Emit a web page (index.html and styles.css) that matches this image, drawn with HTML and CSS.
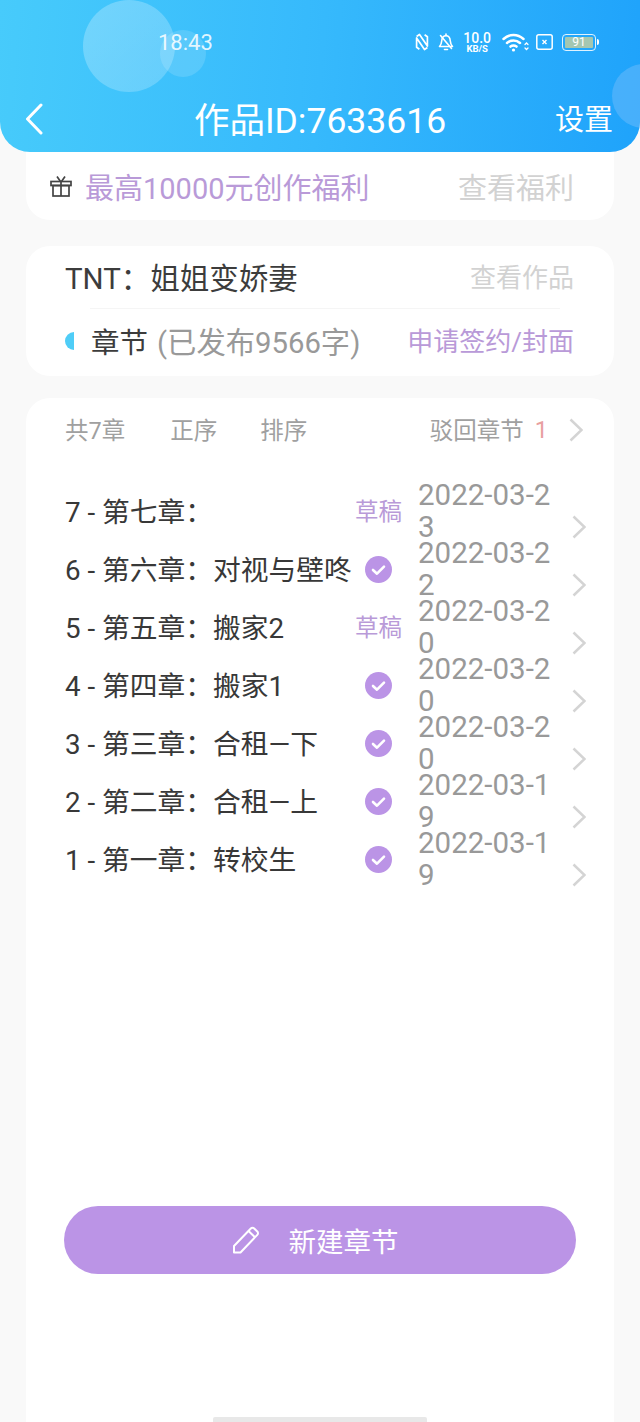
FILE: index.html
```html
<!DOCTYPE html>
<html lang="zh-CN">
<head>
  <meta charset="UTF-8" />
  <title>作品ID:7633616</title>
  <meta name="viewport" content="width=device-width, initial-scale=1.0" />
  <link rel="stylesheet" href="styles.css">
</head>
<body>

<header class="top">
  <span class="bubble bubble-big"></span>
  <span class="bubble bubble-small"></span>
  <span class="bubble bubble-right"></span>

  <div class="status">
    <span class="time">18:43</span>
    <div class="status-icons">
      <svg class="ic-nfc" width="14" height="18" viewBox="0 0 14 18" fill="none" stroke="#fff" stroke-width="1.7" stroke-linejoin="round"><path d="M1.600 3.500 4.500 1.500 4.500 1.500 12.400 13V3.800L9.600 1.700M12.400 14.500 9.500 16.500 1.600 5v9.200l2.800 2.100"/></svg>
      <svg class="ic-bell" width="16" height="18" viewBox="0 0 16 18" fill="none" stroke="#fff" stroke-width="1.6" stroke-linecap="round" stroke-linejoin="round"><path d="M1.5 13.5h13c-1.500-1.500-2-3-2.200-5.500C12 4.500 10.500 2.800 8 2.800S4 4.500 3.700 8c-.2 2.500-.7 4-2.200 5.500Z"/><path d="M6.500 16.500h3M8 1v1.500M2.500 2.500l11 13"/></svg>
      <div class="speed"><span class="speed-num">10.0</span><span class="speed-unit">KB/S</span></div>
      <svg class="ic-wifi" width="27" height="19" viewBox="0 0 27 19" fill="none" stroke="#fff" stroke-width="2.500" stroke-linecap="round"><path d="M1.500 6C7.500.6 15.500.6 21.500 6M5 10c3.700-3.300 9.300-3.300 13 0M8.500 13.600c1.800-1.400 4.200-1.400 6 0"/><circle cx="11.500" cy="17" r="1.600" fill="#fff" stroke="none"/><path d="m23 11.500 1.500-1.500 1.500 1.500M23 15l1.500 1.500L26 15" stroke-width="1.300"/></svg>
      <svg class="ic-sim" width="17" height="16" viewBox="0 0 17 16" fill="none" stroke="#fff"><rect x=".8" y=".8" width="15.400" height="14.400" rx="2" stroke-width="1.500"/><path d="m6.500 6 4 4m0-4-4 4" stroke-width="1.400"/></svg>
      <div class="battery"><span class="battery-level">91</span></div>
    </div>
  </div>

  <nav class="nav">
    <svg class="back" width="18" height="32" viewBox="0 0 18 32" fill="none" stroke="#fff" stroke-width="3" stroke-linecap="round" stroke-linejoin="round"><path d="M16 2 2.500 16 16 30"/></svg>
    <h1 class="title">作品ID:7633616</h1>
    <span class="settings">设置</span>
  </nav>
</header>

<section class="card benefit">
  <svg class="gift" width="22" height="22" viewBox="0 0 22 22" fill="none" stroke="#444" stroke-width="1.700"><rect x="1" y="6.500" width="20" height="4"/><rect x="3" y="10.500" width="16" height="10.500"/><path d="M11 6.500V21M7 1.500l3.500 5M15 1.500l-3.500 5"/></svg>
  <span class="benefit-text">最高10000元创作福利</span>
  <span class="benefit-link">查看福利</span>
</section>

<section class="card book">
  <div class="book-head">
    <span class="book-name">TNT：姐姐变娇妻</span>
    <span class="book-link">查看作品</span>
  </div>
  <div class="book-line"></div>
  <div class="book-foot">
    <span class="dot"></span>
    <span class="book-chapters">章节 <em>(已发布9566字)</em></span>
    <span class="book-apply">申请签约/封面</span>
  </div>
</section>

<section class="card chapters">
  <div class="tools">
    <span class="tool-count">共7章</span>
    <span class="tool-item">正序</span>
    <span class="tool-item">排序</span>
    <span class="tool-reject">驳回章节</span>
    <span class="tool-num">1</span>
    <svg class="chev" width="14" height="24" viewBox="0 0 14 24" fill="none" stroke="#d4d4d4" stroke-width="2.500"><path d="m1.500 1.500 11 10.500-11 10.500"/></svg>
  </div>

  <ul class="list">
    <li class="row">
      <span class="row-name">7 - 第七章：</span>
      <span class="draft">草稿</span>
      <span class="date">2022-03-23</span>
      <svg class="chev" width="14" height="24" viewBox="0 0 14 24" fill="none" stroke="#d4d4d4" stroke-width="2.500"><path d="m1.500 1.500 11 10.500-11 10.500"/></svg>
    </li>
    <li class="row">
      <span class="row-name">6 - 第六章：对视与壁咚</span>
      <svg class="ok" width="27" height="27" viewBox="0 0 27 27"><circle cx="13.500" cy="13.500" r="13.500" fill="#bb94e6"/><path d="m8 14 4 3.700 7-7" fill="none" stroke="#fff" stroke-width="2.600" stroke-linecap="round" stroke-linejoin="round"/></svg>
      <span class="date">2022-03-22</span>
      <svg class="chev" width="14" height="24" viewBox="0 0 14 24" fill="none" stroke="#d4d4d4" stroke-width="2.500"><path d="m1.500 1.500 11 10.500-11 10.500"/></svg>
    </li>
    <li class="row">
      <span class="row-name">5 - 第五章：搬家2</span>
      <span class="draft">草稿</span>
      <span class="date">2022-03-20</span>
      <svg class="chev" width="14" height="24" viewBox="0 0 14 24" fill="none" stroke="#d4d4d4" stroke-width="2.500"><path d="m1.500 1.500 11 10.500-11 10.500"/></svg>
    </li>
    <li class="row">
      <span class="row-name">4 - 第四章：搬家1</span>
      <svg class="ok" width="27" height="27" viewBox="0 0 27 27"><circle cx="13.500" cy="13.500" r="13.500" fill="#bb94e6"/><path d="m8 14 4 3.700 7-7" fill="none" stroke="#fff" stroke-width="2.600" stroke-linecap="round" stroke-linejoin="round"/></svg>
      <span class="date">2022-03-20</span>
      <svg class="chev" width="14" height="24" viewBox="0 0 14 24" fill="none" stroke="#d4d4d4" stroke-width="2.500"><path d="m1.500 1.500 11 10.500-11 10.500"/></svg>
    </li>
    <li class="row">
      <span class="row-name">3 - 第三章：合租—下</span>
      <svg class="ok" width="27" height="27" viewBox="0 0 27 27"><circle cx="13.500" cy="13.500" r="13.500" fill="#bb94e6"/><path d="m8 14 4 3.700 7-7" fill="none" stroke="#fff" stroke-width="2.600" stroke-linecap="round" stroke-linejoin="round"/></svg>
      <span class="date">2022-03-20</span>
      <svg class="chev" width="14" height="24" viewBox="0 0 14 24" fill="none" stroke="#d4d4d4" stroke-width="2.500"><path d="m1.500 1.500 11 10.500-11 10.500"/></svg>
    </li>
    <li class="row">
      <span class="row-name">2 - 第二章：合租—上</span>
      <svg class="ok" width="27" height="27" viewBox="0 0 27 27"><circle cx="13.500" cy="13.500" r="13.500" fill="#bb94e6"/><path d="m8 14 4 3.700 7-7" fill="none" stroke="#fff" stroke-width="2.600" stroke-linecap="round" stroke-linejoin="round"/></svg>
      <span class="date">2022-03-19</span>
      <svg class="chev" width="14" height="24" viewBox="0 0 14 24" fill="none" stroke="#d4d4d4" stroke-width="2.500"><path d="m1.500 1.500 11 10.500-11 10.500"/></svg>
    </li>
    <li class="row">
      <span class="row-name">1 - 第一章：转校生</span>
      <svg class="ok" width="27" height="27" viewBox="0 0 27 27"><circle cx="13.500" cy="13.500" r="13.500" fill="#bb94e6"/><path d="m8 14 4 3.700 7-7" fill="none" stroke="#fff" stroke-width="2.600" stroke-linecap="round" stroke-linejoin="round"/></svg>
      <span class="date">2022-03-19</span>
      <svg class="chev" width="14" height="24" viewBox="0 0 14 24" fill="none" stroke="#d4d4d4" stroke-width="2.500"><path d="m1.500 1.500 11 10.500-11 10.500"/></svg>
    </li>
  </ul>

  <button class="new-btn" type="button">
    <svg width="28" height="28" viewBox="0 0 28 28" fill="none" stroke="#fff" stroke-width="2" stroke-linejoin="round"><path d="M2 26.500V20L18.800 2.500a2.400 2.400 0 0 1 3.400 0l3.100 3a2.400 2.400 0 0 1 0 3.400L8.500 26.500Z"/><path d="m16.500 5 6.500 6.300"/></svg>
    <span>新建章节</span>
  </button>

  <div class="home-bar"></div>
</section>

</body>
</html>
```

FILE: styles.css
```css
* {
  box-sizing: border-box;
}
body {
  margin: 0;
  width: 640px;
  height: 1422px;
  overflow: hidden;
  background: #f9f9f9;
  font-family: Roboto, "Noto Sans CJK SC", sans-serif;
  color: #333;
}
.top {
  position: relative;
  z-index: 2;
  height: 152px;
  overflow: hidden;
  border-radius: 0 0 30px 30px;
  background: linear-gradient(95deg, #47cbfb 0%, #36b9fc 50%, #1fa3fb 100%);
  color: white;
}
.bubble {
  position: absolute;
  border-radius: 50%;
}
.bubble-big {
  left: 83px;
  top: 0;
  width: 92px;
  height: 92px;
  background: linear-gradient(135deg, rgba(255,255,255,0.26), rgba(255,255,255,0.2));
}
.bubble-small {
  left: 160px;
  top: 30px;
  width: 46px;
  height: 47px;
  background: rgba(255,255,255,0.14);
}
.bubble-right {
  left: 612px;
  top: 64px;
  width: 64px;
  height: 64px;
  background: rgba(120,190,250,0.45);
}
.status {
  position: relative;
  display: flex;
  align-items: center;
  justify-content: space-between;
  height: 57px;
  padding: 27px 44px 0 158px;
}
.time {
  font-size: 22px;
  color: rgba(255,255,255,0.85);
}
.status-icons {
  display: flex;
  align-items: center;
}
.ic-bell {
  margin-left: 9px;
}
.speed {
  display: flex;
  flex-direction: column;
  align-items: center;
  margin-left: 9px;
  line-height: 1;
}
.speed-num {
  font-size: 14px;
  font-weight: 500;
  height: 13px;
}
.speed-unit {
  font-size: 9.5px;
  font-weight: 700;
}
.ic-wifi {
  margin-left: 11px;
}
.ic-sim {
  margin-left: 7px;
}
.battery {
  position: relative;
  width: 34px;
  height: 17px;
  margin-left: 9px;
  padding: 2px;
  border: 1.5px solid rgba(255,255,255,0.85);
  border-radius: 4px;
}
.battery::after {
  content: "";
  position: absolute;
  right: -4px;
  top: 4px;
  width: 2px;
  height: 6px;
  background: white;
  border-radius: 0 2px 2px 0;
}
.battery-level {
  display: block;
  height: 100%;
  width: 100%;
  background: #a4c7b1;
  border-radius: 1px;
  font-size: 12px;
  line-height: 10px;
  text-align: center;
}
.nav {
  position: relative;
  display: flex;
  align-items: center;
  justify-content: space-between;
  height: 50px;
  margin-top: 37px;
  padding: 0 27px 4px 25px;
}
.back {
  margin-top: 4px;
}
.title {
  position: absolute;
  left: 0;
  right: 0;
  margin: 0;
  font-size: 35.500px;
  font-weight: 400;
  text-align: center;
}
.settings {
  font-size: 29px;
}
.card {
  margin: 0 26px;
  background: white;
}
.benefit {
  display: flex;
  align-items: center;
  height: 98px;
  margin-top: -30px;
  padding: 30px 40px 0 24px;
  border-radius: 0 0 24px 24px;
  font-size: 29px;
}
.benefit-text {
  margin-left: 13px;
  color: #b99ad8;
}
.benefit-link {
  margin-left: auto;
  font-size: 29px;
  color: #d2d2d2;
}
.book {
  margin-top: 26px;
  height: 130px;
  padding: 0 40px 0 39px;
  border-radius: 24px;
}
.book-head {
  display: flex;
  align-items: center;
  justify-content: space-between;
  height: 62px;
  padding-bottom: 3px;
}
.book-name {
  font-size: 29.500px;
  color: #3c3c3c;
}
.book-link {
  font-size: 26px;
  color: #d2d2d2;
}
.book-line {
  height: 1px;
  margin: 0 14px 0 25px;
  background: #f5f5f5;
}
.book-foot {
  display: flex;
  align-items: center;
  height: 64px;
  padding-bottom: 3px;
}
.dot {
  width: 9px;
  height: 18px;
  margin: 3px 17px 0 0;
  background: #4fcdf7;
  border-radius: 9px 0 0 9px;
}
.book-chapters {
  font-size: 28.500px;
  color: #3c3c3c;
}
.book-chapters em {
  margin-left: 2px;
  font-size: 29.300px;
  font-style: normal;
  color: #999;
}
.book-apply {
  margin-left: auto;
  font-size: 26px;
  color: #b99ad8;
}
.chapters {
  display: flex;
  flex-direction: column;
  height: 1024px;
  margin-top: 22px;
  padding: 0 28px 0 39px;
  border-radius: 24px 24px 0 0;
}
.tools {
  display: flex;
  align-items: center;
  height: 64px;
  font-size: 23.500px;
  color: #a0a0a0;
}
.tool-count,
.tool-item,
.tool-reject {
  margin-bottom: 3px;
}
.tool-item {
  margin-left: 45px;
}
.tool-item + .tool-item {
  margin-left: 43px;
}
.tool-reject {
  margin-left: auto;
}
.tool-num {
  margin: 0 21px 0 11px;
  color: #e8a0a0;
}
.tools .chev {
  margin-right: 3px;
}
.list {
  margin: 20px 0 0;
  padding: 0;
  list-style: none;
}
.row {
  display: flex;
  align-items: center;
  height: 58px;
  font-size: 27.750px;
  color: #383838;
}
.row-name {
  margin: 0 auto 3px 0;
  white-space: nowrap;
}
.draft {
  margin-bottom: 3px;
  font-size: 23.500px;
  color: #b99ad8;
}
.ok {
  margin-right: 10px;
}
.date {
  width: 140px;
  margin-left: 16px;
  font-size: 29.500px;
  line-height: 32px;
  color: #999;
  word-break: break-all;
}
.row .chev {
  align-self: flex-end;
  margin-left: 14px;
  margin-bottom: 1px;
}
.new-btn {
  display: flex;
  align-items: center;
  justify-content: center;
  gap: 29px;
  width: 512px;
  height: 68px;
  margin: 318px 0 0 -1px;
  padding: 0 10px 0 0;
  border: none;
  border-radius: 34px;
  background: #bb94e6;
  color: white;
  font-family: inherit;
  font-size: 27.500px;
}
.home-bar {
  width: 214px;
  height: 5px;
  margin: auto 0 0 148px;
  background: #e8e8e8;
  border-radius: 2px 2px 0 0;
}
```
